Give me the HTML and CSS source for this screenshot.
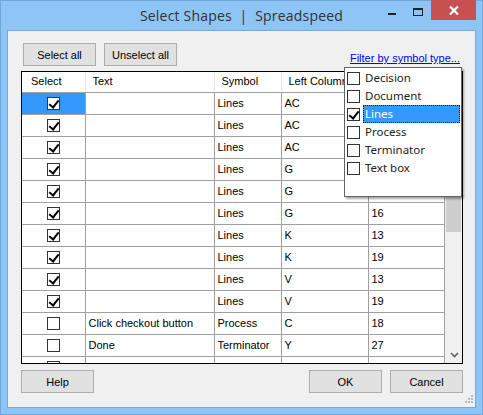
FILE: index.html
```html
<!DOCTYPE html>
<html>
<head>
<meta charset="UTF-8">
<link rel="stylesheet" href="styles.css">
</head>
<body>
<div class="window">
	<div class="titlebar">
		<div></div>
		<div class="title">Select Shapes&nbsp; |&nbsp; Spreadspeed</div>
		<div class="caption">
			<span class="cap-min"></span>
			<span class="cap-max"></span>
			<span class="cap-close">
				<svg width="10" height="9" viewBox="0 0 10 9"><path d="M1 0.5 L9 8.5 M9 0.5 L1 8.5" stroke="#fff" stroke-width="2.2" fill="none"/></svg>
			</span>
		</div>
	</div>
	<div class="client">
		<div class="toolbar">
			<button class="btn">Select all</button>
			<button class="btn">Unselect all</button>
			<a class="filter" href="#">Filter by symbol type...</a>
		</div>
		<div class="grid-wrap">
			<div class="grid">
				<table>
					<tr class="head">
						<th class="c-sel">Select</th><th class="c-text">Text</th><th class="c-sym">Symbol</th><th class="c-left">Left Column</th><th class="c-last"></th>
					</tr>
					<tr><td class="chk selected"><span class="box on"></span></td><td></td><td>Lines</td><td>AC</td><td></td></tr>
					<tr><td class="chk"><span class="box on"></span></td><td></td><td>Lines</td><td>AC</td><td></td></tr>
					<tr><td class="chk"><span class="box on"></span></td><td></td><td>Lines</td><td>AC</td><td></td></tr>
					<tr><td class="chk"><span class="box on"></span></td><td></td><td>Lines</td><td>G</td><td></td></tr>
					<tr><td class="chk"><span class="box on"></span></td><td></td><td>Lines</td><td>G</td><td></td></tr>
					<tr><td class="chk"><span class="box on"></span></td><td></td><td>Lines</td><td>G</td><td>16</td></tr>
					<tr><td class="chk"><span class="box on"></span></td><td></td><td>Lines</td><td>K</td><td>13</td></tr>
					<tr><td class="chk"><span class="box on"></span></td><td></td><td>Lines</td><td>K</td><td>19</td></tr>
					<tr><td class="chk"><span class="box on"></span></td><td></td><td>Lines</td><td>V</td><td>13</td></tr>
					<tr><td class="chk"><span class="box on"></span></td><td></td><td>Lines</td><td>V</td><td>19</td></tr>
					<tr><td class="chk"><span class="box"></span></td><td>Click checkout button</td><td>Process</td><td>C</td><td>18</td></tr>
					<tr><td class="chk"><span class="box"></span></td><td>Done</td><td>Terminator</td><td>Y</td><td>27</td></tr>
					<tr><td class="chk"><span class="box"></span></td><td>Save the details</td><td>Process</td><td>C</td><td>9</td></tr>
				</table>
			</div>
			<div class="vscroll">
				<div class="thumb"></div>
				<div class="track"></div>
				<div class="arrow-down">
					<svg width="9" height="6" viewBox="0 0 9 6"><path d="M1 1 L4.5 4.5 L8 1" stroke="#606060" stroke-width="1.6" fill="none"/></svg>
				</div>
			</div>
			<div class="popup">
				<div class="item"><span class="box"></span><span class="lbl">Decision</span></div>
				<div class="item"><span class="box"></span><span class="lbl">Document</span></div>
				<div class="item"><span class="box on"></span><span class="lbl hl">Lines</span></div>
				<div class="item"><span class="box"></span><span class="lbl">Process</span></div>
				<div class="item"><span class="box"></span><span class="lbl">Terminator</span></div>
				<div class="item"><span class="box"></span><span class="lbl">Text box</span></div>
			</div>
		</div>
		<div class="footer">
			<button class="btn">Help</button>
			<div class="spacer"></div>
			<button class="btn">OK</button>
			<button class="btn">Cancel</button>
		</div>
		<div class="grip">
			<svg width="9" height="9" viewBox="0 0 9 9" fill="#b8b8b8">
				<rect x="6" y="0" width="2" height="2"/>
				<rect x="3" y="3" width="2" height="2"/><rect x="6" y="3" width="2" height="2"/>
				<rect x="0" y="6" width="2" height="2"/><rect x="3" y="6" width="2" height="2"/><rect x="6" y="6" width="2" height="2"/>
			</svg>
		</div>
	</div>
</div>
</body>
</html>
```

FILE: styles.css
```css
* {
	margin: 0;
	padding: 0;
	box-sizing: border-box;
}
body {
	width: 483px;
	height: 415px;
	overflow: hidden;
	font-family: 'Liberation Sans', Arial, sans-serif;
	font-size: 11px;
	color: #000;
}

.window {
	width: 483px;
	height: 415px;
	background: #8cc5f6;
	border: 1px solid #6fa6dc;
	display: flex;
	flex-direction: column;
}

/* title bar */
.titlebar {
	height: 29px;
	display: grid;
	grid-template-columns: 1fr auto 1fr;
}
.title {
	font-family: 'Open Sans', 'Noto Sans', sans-serif;
	font-size: 14px;
	color: #333;
	padding-top: 5px;
	letter-spacing: 0.2px;
}
.caption {
	display: flex;
	justify-content: flex-end;
	align-items: flex-start;
}
.cap-min {
	width: 8px;
	height: 2px;
	background: #222;
	margin-top: 12px;
	margin-right: 17px;
}
.cap-max {
	width: 10px;
	height: 8px;
	border: 1px solid #222;
	border-top-width: 2px;
	margin-top: 7px;
	margin-right: 8px;
}
.cap-close {
	width: 45px;
	height: 20px;
	margin-top: -1px;
	margin-right: 6px;
	background: #c75050;
	display: flex;
	align-items: center;
	justify-content: center;
}

/* client area */
.client {
	flex: 1;
	margin: 0 6px 6px 6px;
	background: #f0f0f0;
	border: 1px solid #78a8d8;
	padding: 12px 12px 12px 13px;
	display: flex;
	flex-direction: column;
	position: relative;
}

.btn {
	font-family: 'Liberation Sans', Arial, sans-serif;
	font-size: 11px;
	color: #000;
	background: #e1e1e1;
	border: 1px solid #adadad;
	width: 73px;
	height: 23px;
}

.toolbar {
	display: flex;
	align-items: flex-start;
	gap: 8px;
	padding-left: 2px;
	height: 28px;
}
.filter {
	margin-left: auto;
	margin-right: 3px;
	margin-top: 9px;
	color: #0000ff;
	text-decoration: underline;
}

/* grid */
.grid-wrap {
	height: 293px;
	border: 1px solid #000;
	background: #fff;
	display: flex;
	position: relative;
}
.grid {
	width: 423px;
	overflow: hidden;
}
table {
	border-collapse: collapse;
	table-layout: fixed;
	width: 423px;
}
th {
	font-weight: normal;
	text-align: left;
	height: 20px;
	padding: 0 0 1px 7px;
	border-right: 1px solid #e5e5e5;
	border-bottom: 1px solid #a0a0a0;
	background: #fff;
}
th.c-sel { width: 63px; padding-left: 9px; }
th.c-text { width: 129px; }
th.c-sym { width: 67px; }
th.c-left { width: 87px; }
th.c-last { border-right: 1px solid #a0a0a0; }
td {
	height: 22px;
	padding: 0 0 0 3px;
	border-right: 1px solid #a0a0a0;
	border-bottom: 1px solid #a0a0a0;
	white-space: nowrap;
	overflow: hidden;
}
td.chk {
	text-align: center;
	padding: 0;
}
td.selected {
	background: #3399ff;
}

.box {
	display: inline-block;
	width: 13px;
	height: 13px;
	border: 1px solid #333;
	background: #fff;
	vertical-align: middle;
	position: relative;
	flex: none;
}
.box.on::after {
	content: "";
	position: absolute;
	left: 3px;
	top: 0px;
	width: 4px;
	height: 8px;
	border-right: 2.6px solid #000;
	border-bottom: 2.6px solid #000;
	transform: rotate(38deg);
}

.vscroll {
	width: 17px;
	background: #f0f0f0;
	display: flex;
	flex-direction: column;
	padding-left: 1px;
}
.thumb {
	height: 160px;
	margin-right: 1px;
	background: #cdcdcd;
}
.track {
	flex: 1;
}
.arrow-down {
	height: 17px;
	display: flex;
	align-items: center;
	justify-content: center;
}

/* filter popup */
.popup {
	position: absolute;
	left: 322px;
	top: -5px;
	width: 118px;
	height: 130px;
	background: #fff;
	border: 1px solid #646464;
	box-shadow: 2px 2px 2px rgba(0, 0, 0, 0.35);
	padding: 1px 1px 0 2px;
	font-family: 'Noto Sans', 'Open Sans', sans-serif;
	font-size: 11.5px;
	color: #222;
}
.item {
	height: 18px;
	display: flex;
	align-items: center;
	gap: 3px;
}
.lbl {
	flex: 1;
	height: 18px;
	line-height: 17px;
	padding-left: 2px;
}
.lbl.hl {
	background: #3399ff;
	color: #fff;
	outline: 1px dotted #222;
	outline-offset: -1px;
}

/* footer */
.footer {
	display: flex;
	align-items: flex-start;
	gap: 8px;
	margin-top: 6px;
}
.spacer {
	flex: 1;
}
.grip {
	position: absolute;
	right: 1px;
	bottom: 1px;
}
```
